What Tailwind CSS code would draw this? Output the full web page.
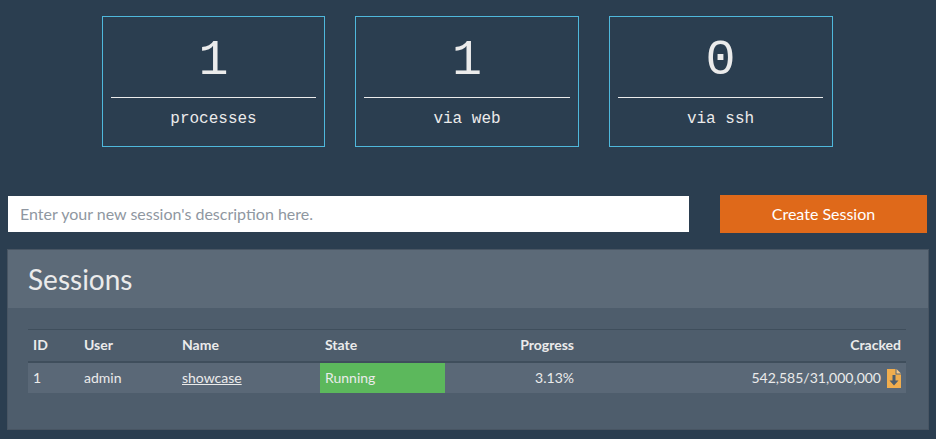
<!DOCTYPE html>
<html lang="en">
<head>
    <meta charset="UTF-8">
    <title>Sessions</title>
    <script src="https://cdn.jsdelivr.net/npm/@tailwindcss/browser@4"></script>
</head>
<body class="bg-[#2b3e50] text-[#ebebeb] font-['Lato',sans-serif] text-sm w-[936px] h-[439px] overflow-hidden">

    <!-- stat boxes -->
    <div class="flex gap-[30px] pl-[102px] pt-4">
        <div class="w-[223px] h-[131px] border border-[#4fb8dc] px-2 font-['Liberation_Mono',monospace] text-center">
            <div class="h-[81px] border-b border-[#ebebeb] text-[50px] leading-[88px]">1</div>
            <div class="text-base leading-[42px]">processes</div>
        </div>
        <div class="w-[224px] h-[131px] border border-[#4fb8dc] px-2 font-['Liberation_Mono',monospace] text-center">
            <div class="h-[81px] border-b border-[#ebebeb] text-[50px] leading-[88px]">1</div>
            <div class="text-base leading-[42px]">via web</div>
        </div>
        <div class="w-[224px] h-[131px] border border-[#4fb8dc] pl-2 pr-[9px] font-['Liberation_Mono',monospace] text-center">
            <div class="h-[81px] border-b border-[#ebebeb] text-[50px] leading-[88px]">0</div>
            <div class="text-base leading-[42px]">via ssh</div>
        </div>
    </div>

    <!-- new session -->
    <form class="flex items-center justify-between pl-2 pr-[9px] mt-12">
        <input type="text" placeholder="Enter your new session's description here." class="w-[681px] h-9 px-3 pb-[2px] bg-white text-[#2b3e50] text-base placeholder:text-[#8f97a1] outline-none">
        <button type="button" class="w-[207px] h-[38px] bg-[#df691a] text-white text-base">Create Session</button>
    </form>

    <!-- sessions panel -->
    <div class="mx-[7px] mt-4 h-[181px] bg-[#4e5d6c] border border-[#485563]">
        <div class="h-[58px] bg-[#5c6a78] px-5 flex items-center">
            <h3 class="text-[28px] font-normal">Sessions</h3>
        </div>
        <div class="px-5 pt-[21px]">
            <table class="w-[878px] table-fixed border-t border-[#3f4e5c]">
                <thead>
                    <tr class="h-8 border-b-2 border-[#3f4e5c] font-bold text-left">
                        <th class="w-[51px] px-[5px]">ID</th>
                        <th class="w-[98px] px-[5px]">User</th>
                        <th class="w-[143px] px-[5px]">Name</th>
                        <th class="w-[125px] px-[5px]">State</th>
                        <th class="w-[134px] px-[5px] text-right">Progress</th>
                        <th class="px-[5px] text-right">Cracked</th>
                    </tr>
                </thead>
                <tbody>
                    <tr class="h-[31px] bg-[#5a6877]">
                        <td class="px-[5px]">1</td>
                        <td class="px-[5px]">admin</td>
                        <td class="px-[5px]"><a href="#" class="underline">showcase</a></td>
                        <td class="px-[5px] bg-[#5cb85c]">Running</td>
                        <td class="px-[5px] text-right">3.13%</td>
                        <td class="px-[5px] text-right">
                            <span class="inline-flex items-center gap-[6px] align-middle">
                                542,585/31,000,000
                                <svg width="14" height="19" viewBox="0 0 14 19">
                                    <path d="M0 0H8.5V5.5H14V19H0Z" fill="#f0ad4e"/>
                                    <path d="M9.5 0L14 4.5H9.5Z" fill="#f5c88a"/>
                                    <path d="M5.5 6H8.5V11.5H11.5L7 16.5L2.5 11.5H5.5Z" fill="#4e5d6c"/>
                                </svg>
                            </span>
                        </td>
                    </tr>
                </tbody>
            </table>
        </div>
    </div>

</body>
</html>
